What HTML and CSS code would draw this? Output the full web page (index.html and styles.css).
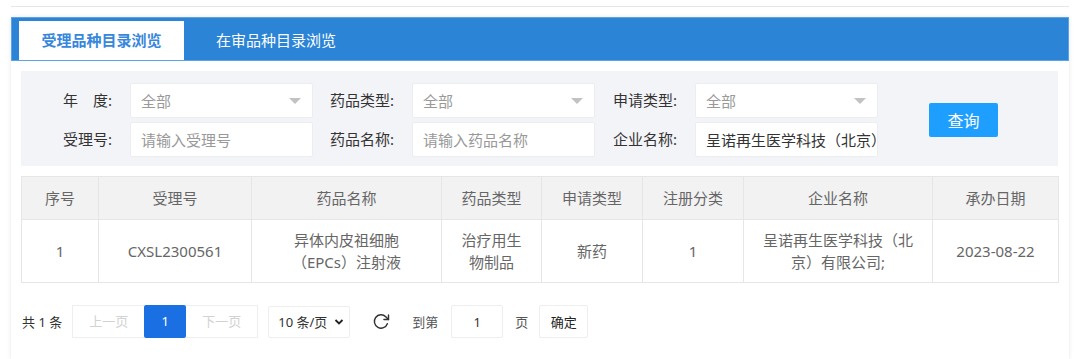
FILE: index.html
```html
<!DOCTYPE html>
<html lang="zh-CN">
<head>
  <meta charset="UTF-8"/>
  <title>受理品种目录浏览</title>
  <link rel="stylesheet" href="styles.css">
</head>
<body>
  <div class="page">
    <div class="topline"></div>
    <div class="panel">
      <div class="tabs">
        <div class="tab active">受理品种目录浏览</div>
        <div class="tab">在审品种目录浏览</div>
      </div>
      <div class="panel-body">
        <div class="filter">
          <div class="fields">
            <label class="lbl">年&emsp;度:</label>
            <div class="select"><span class="ph">全部</span><i class="tri"></i></div>
            <label class="lbl">药品类型:</label>
            <div class="select"><span class="ph">全部</span><i class="tri"></i></div>
            <label class="lbl">申请类型:</label>
            <div class="select"><span class="ph">全部</span><i class="tri"></i></div>
            <label class="lbl">受理号:</label>
            <input class="ipt" placeholder="请输入受理号">
            <label class="lbl">药品名称:</label>
            <input class="ipt" placeholder="请输入药品名称">
            <label class="lbl">企业名称:</label>
            <input class="ipt" value="呈诺再生医学科技（北京）有限公司">
          </div>
          <button class="btn-search">查询</button>
        </div>

        <table class="grid">
          <colgroup>
            <col style="width:77px"><col style="width:153px"><col style="width:190px"><col style="width:100px">
            <col style="width:101px"><col style="width:101px"><col style="width:189px"><col style="width:126px">
          </colgroup>
          <thead>
            <tr><th>序号</th><th>受理号</th><th>药品名称</th><th>药品类型</th><th>申请类型</th><th>注册分类</th><th>企业名称</th><th>承办日期</th></tr>
          </thead>
          <tbody>
            <tr><td>1</td><td>CXSL2300561</td><td>异体内皮祖细胞（EPCs）注射液</td><td>治疗用生物制品</td><td>新药</td><td>1</td><td>呈诺再生医学科技（北京）有限公司;</td><td>2023-08-22</td></tr>
          </tbody>
        </table>

        <div class="pager">
          <span class="total">共 1 条</span>
          <span class="pg prev">上一页</span>
          <span class="pg cur">1</span>
          <span class="pg next">下一页</span>
          <div class="limit">10 条/页
            <svg width="10" height="10" viewBox="0 0 10 10"><polyline points="1.5,3 5,6.5 8.5,3" fill="none" stroke="#222" stroke-width="1.8"/></svg>
          </div>
          <svg class="refresh" width="20" height="20" viewBox="0 0 24 24" fill="none" stroke="#333" stroke-width="1.7" stroke-linecap="round" stroke-linejoin="round"><polyline points="21 3.5 21 9 15.5 9"/><path d="M19.6 14a8 8 0 1 1-1.9-8.3L21 9"/></svg>
          <span class="goto">到第</span>
          <input class="page-ipt" value="1">
          <span class="goto unit">页</span>
          <button class="btn-ok">确定</button>
        </div>
      </div>
    </div>
  </div>
</body>
</html>
```

FILE: styles.css
```css
body { margin:0; background:#fff; font-family:"Noto Sans","Noto Sans CJK SC",sans-serif; color:#333; overflow:hidden; }
.page { padding:0 11px; }
.topline { height:6px; border-bottom:1px solid #e6e6e6; margin-bottom:10px; }
.panel { box-shadow:0 0 4px rgba(0,0,0,0.1); height:calc(100vh - 17px); box-sizing:border-box; }
.tabs { display:flex; align-items:flex-end; height:44px; box-sizing:border-box; background:#2b84d6; border:1px solid #5da2e4; padding-left:7px; }
.tab { height:39px; line-height:39px; padding:0 22px; font-size:15px; color:#fff; margin-right:10px; }
.tab.active { background:#fff; color:#3787dc; font-weight:bold; width:165px; box-sizing:border-box; text-align:center; padding:0; }
.panel-body { padding:10px 11px 0 10px; }
.filter { display:flex; align-items:center; background:#f3f4f8; padding:12px 0 9px; }
.fields { display:grid; grid-template-columns:109px 183px 99px 183px 100px 183px; row-gap:4px; }
.lbl { height:35px; line-height:35px; text-align:right; padding-right:18px; font-size:15px; color:#333; }
.select, .ipt { box-sizing:border-box; height:35px; background:#fff; border:1px solid #ebedf0; border-radius:2px; font-size:15px; font-family:inherit; }
.select { display:flex; align-items:center; padding:0 11px 0 10px; }
.select .ph { flex:1; color:#999; }
.tri { width:0; height:0; border-left:6px solid transparent; border-right:6px solid transparent; border-top:6px solid #c2c2c2; }
.ipt { padding:0 0 0 10px; color:#333; outline:none; width:183px; }
.ipt::placeholder { color:#999; }
.btn-search { margin-left:51px; width:69px; height:34px; border:0; border-radius:2px; background:#1e9fff; color:#fff; font-size:16px; font-family:inherit; }
.grid { width:100%; margin-top:10px; border-collapse:collapse; table-layout:fixed; font-size:15px; color:#666; }
.grid th, .grid td { border:1px solid #e6e6e6; text-align:center; line-height:22px; }
.grid th { background:#f2f2f2; font-weight:normal; padding:10px 15px; }
.grid td { padding:9px 15px; }
.pager { display:flex; align-items:center; margin-top:22px; font-size:13px; color:#333; }
.total { margin-right:10px; margin-left:1px; }
.pg { box-sizing:border-box; height:33px; line-height:31px; text-align:center; border:1px solid #eee; }
.prev { width:72px; border-right:0; color:#d2d2d2; }
.next { width:72px; border-left:0; color:#d2d2d2; }
.cur { width:42px; line-height:33px; border:0; background:#1a6fe3; color:#fff; border-radius:2px; }
.limit { display:flex; align-items:center; justify-content:space-between; box-sizing:border-box; margin-left:10px; width:82px; height:32px; padding:0 5px 0 9px; border:1px solid #eee; border-radius:2px; }
.refresh { margin-left:21px; }
.goto { margin-left:21px; color:#555; }
.goto.unit { margin-left:12px; }
.page-ipt { box-sizing:border-box; margin-left:13px; width:52px; height:33px; border:1px solid #eee; border-radius:2px; text-align:center; font-size:13px; font-family:inherit; color:#333; }
.btn-ok { box-sizing:border-box; margin-left:11px; width:49px; height:33px; border:1px solid #eee; border-radius:2px; background:#fff; font-size:13px; font-family:inherit; color:#222; }
```
